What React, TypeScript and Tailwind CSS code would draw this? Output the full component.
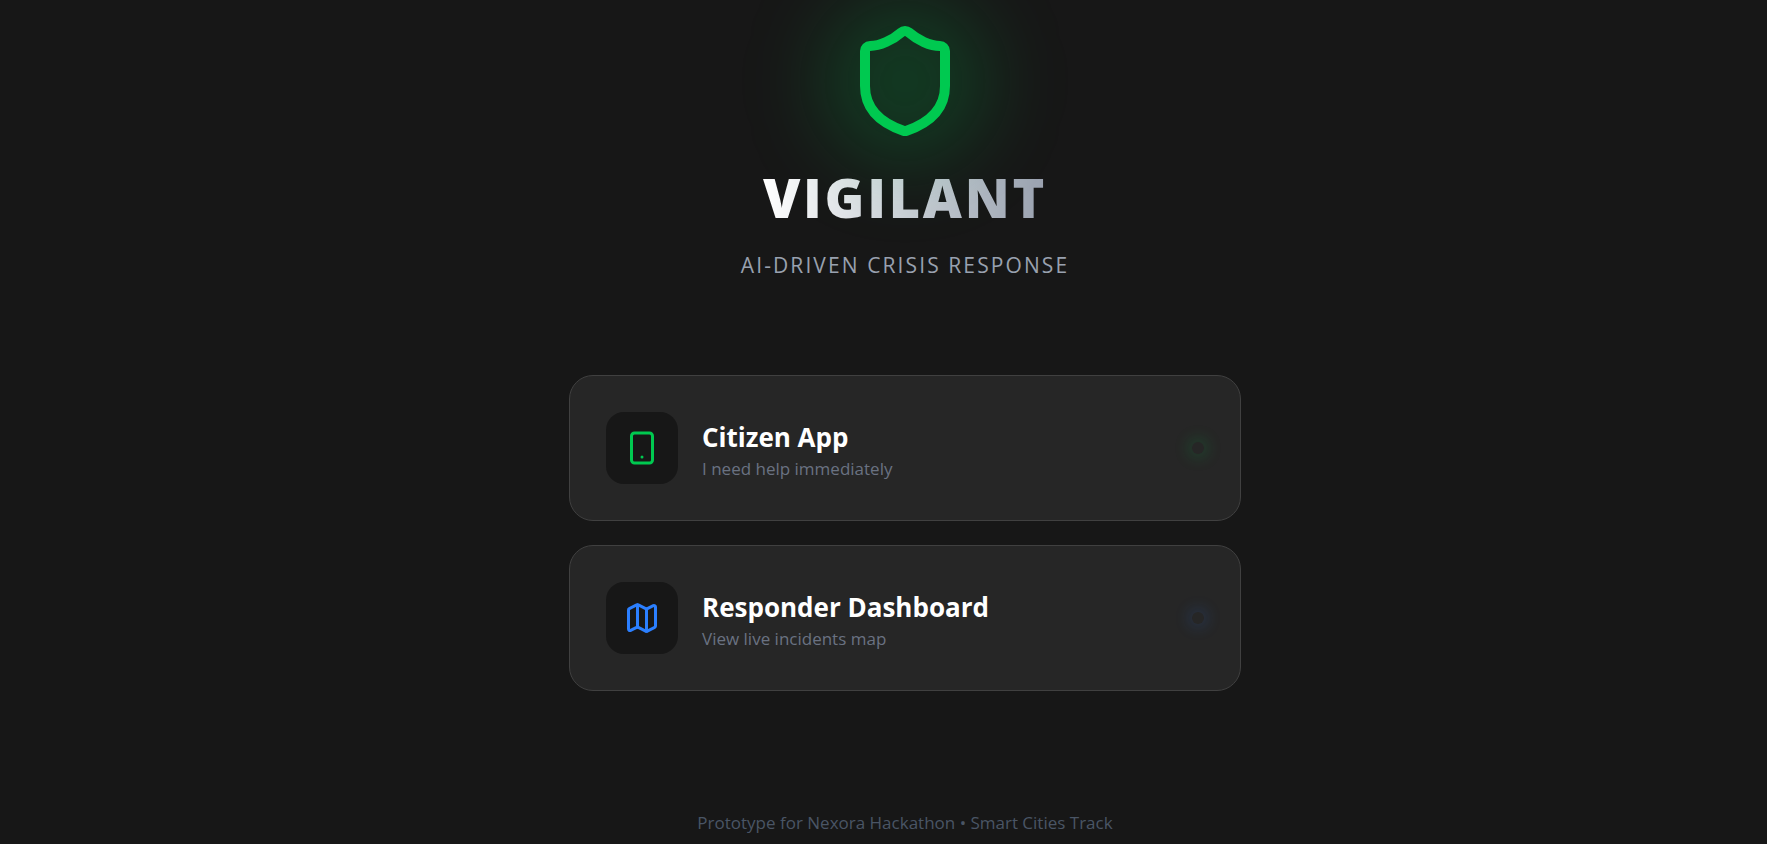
import { Map, Shield, Smartphone } from "lucide-react";
import type { ReactNode } from "react";

type EntryCardProps = {
  href: string;
  icon: ReactNode;
  title: string;
  description: string;
  glow: string;
};

function EntryCard({ href, icon, title, description, glow }: EntryCardProps) {
  return (
    <a
      href={href}
      className="flex items-center gap-6 rounded-3xl border border-[#404040] bg-[#262626] p-9"
    >
      <span className="flex size-18 shrink-0 items-center justify-center rounded-[18px] bg-[#171717]">
        {icon}
      </span>
      <span className="flex min-w-0 grow flex-col pt-1.5">
        <span className="text-[26px] leading-9 font-bold text-white">{title}</span>
        <span className="text-[17px] leading-7 text-[#6a7282]">{description}</span>
      </span>
      <span className={`size-3 shrink-0 rounded-full ${glow}`} />
    </a>
  );
}

export default function App() {
  return (
    <div className="flex min-h-screen flex-col items-center bg-[#171717] pt-[21px] pl-[43px] font-['Open_Sans','Noto_Sans',sans-serif]">
      <header className="flex flex-col items-center">
        <div className="relative">
          <div className="absolute -inset-6 rounded-full bg-[#00c950]/20 blur-[40px]" />
          <Shield size={120} strokeWidth={2} className="relative text-[#00c950]" />
        </div>
        <h1 className="mt-[23px] bg-linear-to-r from-white to-[#99a1af] bg-clip-text text-[54px] leading-[66px] font-extrabold tracking-wider text-transparent">
          VIGILANT
        </h1>
        <p className="mt-[21px] text-[21px] leading-7 tracking-widest text-[#99a1af]">
          AI-DRIVEN CRISIS RESPONSE
        </p>
      </header>
      <main className="mt-24 flex w-full max-w-2xl flex-col gap-6">
        <EntryCard
          href="#citizen"
          icon={<Smartphone size={36} className="text-[#00c950]" />}
          title="Citizen App"
          description="I need help immediately"
          glow="shadow-[0_0_16px_3px_rgba(0,201,80,0.22)]"
        />
        <EntryCard
          href="#responder"
          icon={<Map size={36} className="text-[#2b7fff]" />}
          title="Responder Dashboard"
          description="View live incidents map"
          glow="shadow-[0_0_16px_3px_rgba(43,127,255,0.2)]"
        />
      </main>
      <footer className="mt-[118px] text-[17px] leading-7 text-[#4a5565]">
        Prototype for Nexora Hackathon • Smart Cities Track
      </footer>
    </div>
  );
}
